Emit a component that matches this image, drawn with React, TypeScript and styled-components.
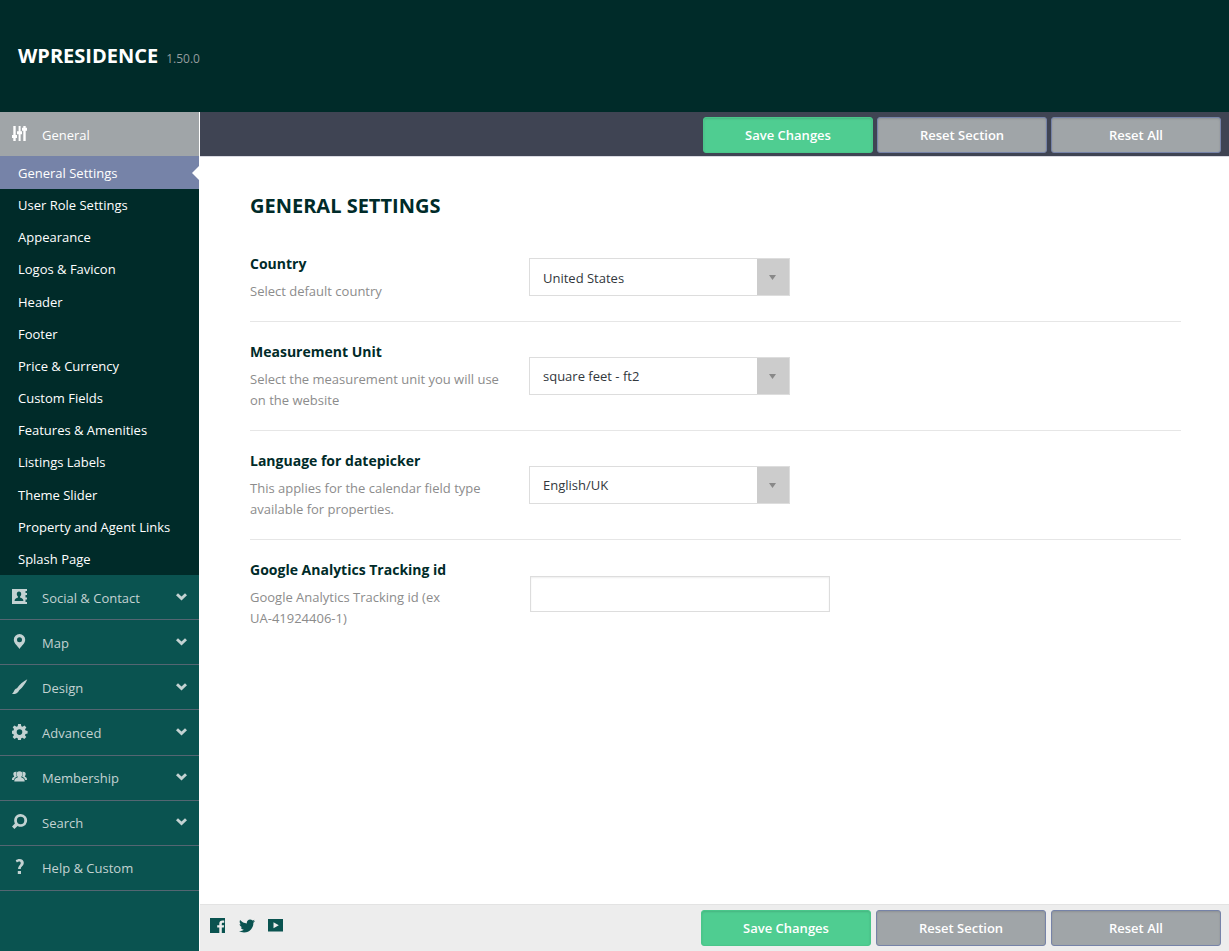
import React from "react";
import styled, { createGlobalStyle } from "styled-components";
import { FaTwitter } from "react-icons/fa";

const GlobalStyle = createGlobalStyle`
  * { box-sizing: border-box; }
  body {
    margin: 0;
    background: #fff;
    font-family: "Open Sans", "Noto Sans", sans-serif;
    font-size: 13px;
    line-height: 20px;
  }
  button, input, select { font: inherit; }
`;

const Page = styled.div`
  display: flex;
  flex-direction: column;
  min-height: 100vh;
`;

const Header = styled.header`
  display: flex;
  align-items: baseline;
  gap: 8px;
  height: 112px;
  padding: 42px 18px 0;
  background: #002b29;
`;

const Brand = styled.h2`
  margin: 0;
  font-size: 20px;
  line-height: 28px;
  font-weight: 700;
  color: #fff;
`;

const Version = styled.span`
  font-size: 12px;
  color: #939d9e;
`;

const Body = styled.div`
  display: flex;
  flex: 1;
`;

const Sidebar = styled.nav`
  flex: none;
  width: 199px;
  background: #0a5350;
`;

const SectionButton = styled.button<{ $active?: boolean }>`
  display: flex;
  flex: 1;
  align-items: center;
  width: 100%;
  min-height: 44px;
  padding: 1px 12px 0;
  border: 0;
  border-bottom: ${(p) => (p.$active ? "0" : "1px solid #546672")};
  background: ${(p) => (p.$active ? "#a0a5a8" : "transparent")};
  color: ${(p) => (p.$active ? "#fff" : "#c3d2d2")};
  text-align: left;
  cursor: pointer;
`;

const IconSlot = styled.span`
  display: flex;
  width: 30px;
  padding-bottom: 2px;
`;

const SectionName = styled.span`
  flex: 1;
`;

const ChevronSlot = styled.span`
  display: flex;
  padding-bottom: 2px;
`;

const SubMenu = styled.ul`
  display: flex;
  flex-direction: column;
  min-height: 419px;
  margin: 0;
  padding: 0;
  list-style: none;
  background: #002b29;
`;

const SubItem = styled.li<{ $active?: boolean }>`
  position: relative;
  display: flex;
  flex: 1;
  min-height: ${(p) => (p.$active ? "33px" : "32px")};
  background: ${(p) => (p.$active ? "#7683a8" : "transparent")};

  &::after {
    content: "";
    display: ${(p) => (p.$active ? "block" : "none")};
    position: absolute;
    right: 0;
    top: 10px;
    border: 7px solid transparent;
    border-left-width: 0;
    border-right-color: #fff;
  }
`;

const SubLink = styled.a`
  display: flex;
  flex: 1;
  align-items: center;
  padding: 0 18px;
  color: #fff;
  text-decoration: none;
`;

const SectionList = styled.div`
  display: flex;
  flex-direction: column;
  min-height: 316px;
`;

const Main = styled.main`
  display: flex;
  flex: 1;
  flex-direction: column;
  min-width: 0;
  padding-left: 1px;
`;

const Toolbar = styled.div`
  display: flex;
  justify-content: flex-end;
  gap: 4px;
  padding: 5px 8px 3px;
  border-bottom: 1px solid #d9dae2;
  background: #3f4453;
`;

const ActionButton = styled.button<{ $primary?: boolean }>`
  width: 170px;
  height: 36px;
  padding: 0;
  border: 1px solid ${(p) => (p.$primary ? "#4ac68a" : "#7683a8")};
  border-radius: 3px;
  background: ${(p) => (p.$primary ? "#4fcd91" : "#a0a5a8")};
  box-shadow: inset 0 1px 2px rgba(0, 0, 0, 0.12);
  color: #fff;
  font-weight: 600;
  cursor: pointer;
`;

const Content = styled.form`
  flex: 1;
  padding: 35px 48px 24px 50px;
`;

const Title = styled.h1`
  margin: 0 0 14px;
  font-size: 20px;
  line-height: 28px;
  font-weight: 700;
  color: #002b29;
`;

const Field = styled.div`
  display: grid;
  grid-template-columns: 256px 1fr;
  column-gap: 23px;
  align-items: center;
  padding: 20px 0 19px;
  border-bottom: 1px solid #e6e6e6;

  &:last-child {
    border-bottom: 0;
  }
`;

const Label = styled.label`
  display: block;
  margin-bottom: 7px;
  font-size: 14px;
  font-weight: 700;
  color: #002b29;
`;

const Hint = styled.p`
  margin: 0;
  line-height: 21px;
  color: #8c8c8c;
`;

const NoBreak = styled.span`
  white-space: nowrap;
`;

const SelectBox = styled.div`
  position: relative;
  width: 261px;
  margin-bottom: 2px;
`;

const Select = styled.select`
  appearance: none;
  display: block;
  width: 100%;
  height: 38px;
  padding: 1px 46px 0 13px;
  border: 1px solid #ddd;
  border-radius: 0;
  background: linear-gradient(#ccc, #ccc) right / 32px 100% no-repeat #fff;
  color: #32373c;
`;

const Arrow = styled.svg`
  position: absolute;
  right: 14px;
  top: 17px;
  pointer-events: none;
`;

const TextInput = styled.input`
  display: block;
  width: 300px;
  height: 36px;
  margin: 0 0 2px 1px;
  padding: 0 12px;
  border: 1px solid #ddd;
  border-radius: 0;
  box-shadow: inset 0 1px 2px rgba(0, 0, 0, 0.07);
`;

const Footer = styled.footer`
  display: flex;
  align-items: flex-start;
  gap: 5px;
  padding: 5px 8px 5px 10px;
  border-top: 1px solid #e3e3e3;
  background: #ededed;
`;

const Social = styled.div`
  display: flex;
  flex: 1;
  gap: 13px;
  padding-top: 8px;
`;

const SocialLink = styled.a`
  display: flex;
  color: #0a5350;
`;

const icons: Record<string, React.ReactNode> = {
  sliders: (
    <path d="M1.300 0h2.400v9H5v3H3.700v3H1.300v-3H0V9h1.300zM6.600 0h2v5.200H10v3H8.600V15h-2V8.200H5v-3h1.600zM11.300 0h2.400v1.800H15v3h-1.300V15h-2.400V4.800H10v-3h1.300z" />
  ),
  contacts: (
    <path
      fillRule="evenodd"
      d="M0 0h15v2h-1.500v2H15v2h-1.500v2.500H15v2h-1.500V13H15v2H0zM7 2.500c-1.500 0-2.200 1-2.200 2.400 0 1.300.6 2.100 1.200 2.700v.8C4 9 2.600 9.600 2.600 12h8.800c0-2.400-1.400-3-3.400-3.600v-.8c.6-.6 1.200-1.400 1.200-2.700C9.200 3.500 8.500 2.500 7 2.500z"
    />
  ),
  pin: (
    <path
      fillRule="evenodd"
      d="M7.500 0a5.700 5.700 0 0 0-5.700 5.700c0 3.800 3.700 5.800 5.700 9.300 2-3.500 5.700-5.500 5.700-9.300A5.700 5.700 0 0 0 7.500 0zm0 3.200a2.500 2.500 0 1 1 0 5 2.500 2.500 0 0 1 0-5z"
    />
  ),
  brush: (
    <path d="M15.300.2C11.500 2 7.500 5.500 5 9.200l2.200 2C11 8 14 3.500 15.300.2zM5 9.200c-1.900.4-2.600 2-3.200 3.400-.4 1-1 1.700-1.800 2.400 2.800.3 6-.6 7.200-3.800z" />
  ),
  gear: (
    <path
      fillRule="evenodd"
      transform="translate(-.5 0)"
      d="M6.600 0h2.800l.4 2.200 1.300.6L13 1.500 14.900 3.400l-1.400 1.800.6 1.400 2 .3v2.700l-2.100.4-.6 1.300 1.400 1.800-2 2-1.800-1.300-1.300.5-.4 2.200H6.600l-.4-2.200-1.300-.5-1.900 1.300-1.900-2 1.300-1.900-.5-1.300-2-.3V6.800l2.100-.4.500-1.300L1.200 3.300 3 1.500l1.900 1.300 1.300-.6zM8 5.300a2.800 2.800 0 1 0 0 5.600 2.800 2.800 0 0 0 0-5.600z"
    />
  ),
  group: (
    <path d="M7.500 2.200c2 0 3 1.200 3 2.900 0 1.100-.4 2-1.100 2.500v.8c1.900.6 3.300 1.300 3.300 4.100H2.300c0-2.800 1.400-3.500 3.300-4.100v-.8c-.7-.5-1.100-1.400-1.100-2.500 0-1.700 1-2.900 3-2.900zM3.900 2.700c.3 0 .6 0 .8.100-.9 1.700-.7 3.400.2 4.900-1.600.7-2.700 1.600-3.100 3.300H0c0-2.300.6-2.700 2.100-3.200v-.9c-.5-.4-.8-1-.8-1.900 0-1.400 1-2.300 2.600-2.300zM11.100 2.700c-.3 0-.6 0-.8.100.9 1.700.7 3.400-.2 4.900 1.600.7 2.700 1.600 3.100 3.300H15c0-2.300-.6-2.700-2.100-3.200v-.9c.5-.4.8-1 .8-1.900 0-1.400-1-2.300-2.600-2.300z" />
  ),
  search: (
    <path
      fillRule="evenodd"
      d="M8.600 0a6.400 6.400 0 0 0-5.700 9.400L0 12.600 2.400 15l3.200-3A6.400 6.400 0 1 0 8.600 0zm0 2.800a3.700 3.700 0 1 1 0 7.400 3.700 3.700 0 0 1 0-7.400z"
    />
  ),
  help: (
    <path d="M3.700 1.500C4.700.500 6 0 7.500 0c2.500 0 4.300 1.400 4.300 3.800 0 3.200-3 3.500-3 6.200H6.100c0-3.400 2.600-4 2.600-6 0-1-.5-1.600-1.500-1.600-.9 0-1.600.4-2.300 1.100zM5.800 12h3.200v3H5.800z" />
  ),
};

const Icon = ({ name }: { name: string }) => (
  <svg width="16" height="16" viewBox="0 0 16 16" fill="currentColor" aria-hidden="true">
    {icons[name]}
  </svg>
);

const Chevron = () => (
  <svg width="11" height="8" viewBox="0 0 11 8" fill="none" stroke="currentColor" strokeWidth="2.900" aria-hidden="true">
    <path d="M1 1.300 5.500 5.600 10 1.300" />
  </svg>
);

const subItems = [
  "General Settings",
  "User Role Settings",
  "Appearance",
  "Logos & Favicon",
  "Header",
  "Footer",
  "Price & Currency",
  "Custom Fields",
  "Features & Amenities",
  "Listings Labels",
  "Theme Slider",
  "Property and Agent Links",
  "Splash Page",
];

const sections = [
  { name: "Social & Contact", icon: "contacts", expandable: true },
  { name: "Map", icon: "pin", expandable: true },
  { name: "Design", icon: "brush", expandable: true },
  { name: "Advanced", icon: "gear", expandable: true },
  { name: "Membership", icon: "group", expandable: true },
  { name: "Search", icon: "search", expandable: true },
  { name: "Help & Custom", icon: "help", expandable: false },
];

const selects = [
  { id: "country", label: "Country", hint: "Select default country", value: "United States" },
  {
    id: "unit",
    label: "Measurement Unit",
    hint: "Select the measurement unit you will use on the website",
    value: "square feet - ft2",
  },
  {
    id: "language",
    label: "Language for datepicker",
    hint: "This applies for the calendar field type available for properties.",
    value: "English/UK",
  },
];

const Actions = () => (
  <>
    <ActionButton type="button" $primary>
      Save Changes
    </ActionButton>
    <ActionButton type="button">Reset Section</ActionButton>
    <ActionButton type="button">Reset All</ActionButton>
  </>
);

export default function App() {
  return (
    <Page>
      <GlobalStyle />
      <Header>
        <Brand>WPRESIDENCE</Brand>
        <Version>1.50.0</Version>
      </Header>
      <Body>
        <Sidebar>
          <SectionButton type="button" $active>
            <IconSlot>
              <Icon name="sliders" />
            </IconSlot>
            <SectionName>General</SectionName>
          </SectionButton>
          <SubMenu>
            {subItems.map((item, i) => (
              <SubItem key={item} $active={i === 0}>
                <SubLink href="#">{item}</SubLink>
              </SubItem>
            ))}
          </SubMenu>
          <SectionList>
            {sections.map((s) => (
              <SectionButton type="button" key={s.name}>
                <IconSlot>
                  <Icon name={s.icon} />
                </IconSlot>
                <SectionName>{s.name}</SectionName>
                {s.expandable && (
                  <ChevronSlot>
                    <Chevron />
                  </ChevronSlot>
                )}
              </SectionButton>
            ))}
          </SectionList>
        </Sidebar>
        <Main>
          <Toolbar>
            <Actions />
          </Toolbar>
          <Content>
            <Title>GENERAL SETTINGS</Title>
            <div>
              {selects.map((f) => (
                <Field key={f.id}>
                  <div>
                    <Label htmlFor={f.id}>{f.label}</Label>
                    <Hint>{f.hint}</Hint>
                  </div>
                  <SelectBox>
                    <Select id={f.id} defaultValue={f.value}>
                      <option>{f.value}</option>
                    </Select>
                    <Arrow width="7" height="5" viewBox="0 0 7 5" fill="#888" aria-hidden="true">
                      <path d="M0 0h7L3.500 5z" />
                    </Arrow>
                  </SelectBox>
                </Field>
              ))}
              <Field>
                <div>
                  <Label htmlFor="analytics">Google Analytics Tracking id</Label>
                  <Hint>
                    Google Analytics Tracking id (ex <NoBreak>UA-41924406-1)</NoBreak>
                  </Hint>
                </div>
                <TextInput id="analytics" type="text" />
              </Field>
            </div>
          </Content>
          <Footer>
            <Social>
              <SocialLink href="#" aria-label="Facebook">
                <svg width="16" height="16" viewBox="0 0 16 16" aria-hidden="true">
                  <path
                    fill="currentColor"
                    fillRule="evenodd"
                    d="M0 0h15v15h-3.200V9.500h2l.3-2.300h-2.300V5.800c0-.7.300-1.100 1.100-1.100h1.300V2.600c-.5-.1-1.100-.1-1.700-.1-2 0-3.200 1.200-3.200 3.100v1.600H7.200v2.300h2.100V15H0z"
                  />
                </svg>
              </SocialLink>
              <SocialLink href="#" aria-label="Twitter">
                <FaTwitter size={16} />
              </SocialLink>
              <SocialLink href="#" aria-label="YouTube">
                <svg width="16" height="16" viewBox="0 0 16 16" aria-hidden="true">
                  <path fill="currentColor" fillRule="evenodd" d="M0 1h15v12.500H0zM5.500 4.200v6l5.300-3z" />
                </svg>
              </SocialLink>
            </Social>
            <Actions />
          </Footer>
        </Main>
      </Body>
    </Page>
  );
}
